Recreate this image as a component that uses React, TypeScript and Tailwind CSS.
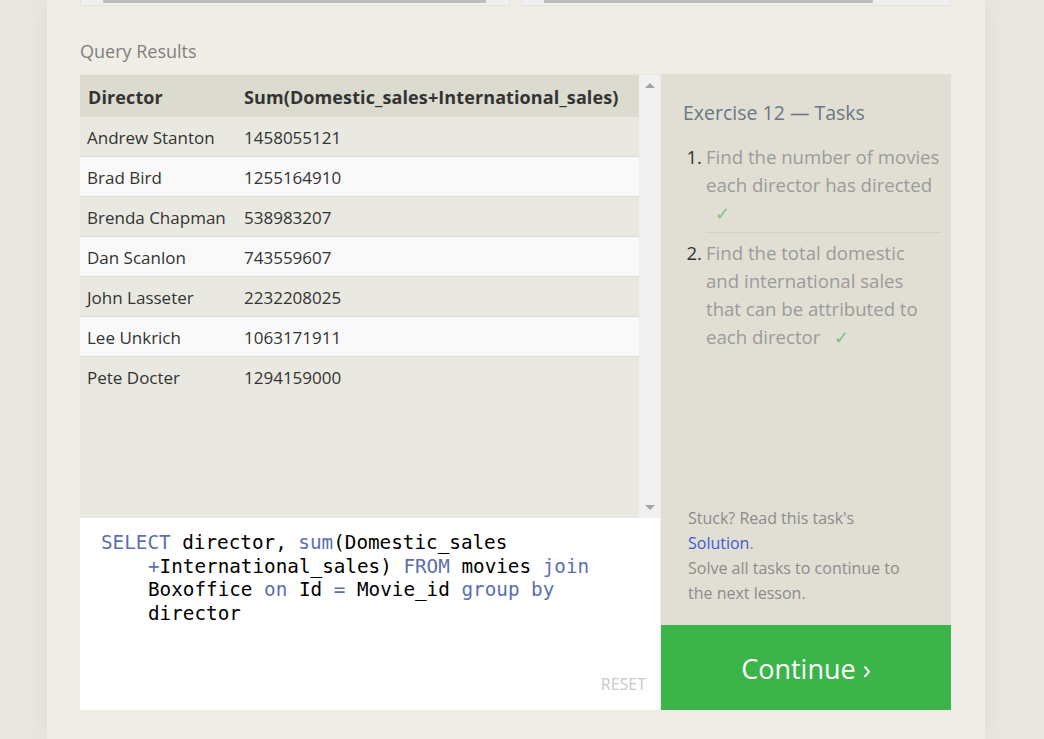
import React from "react";

const rows: [string, string][] = [
  ["Andrew Stanton", "1458055121"],
  ["Brad Bird", "1255164910"],
  ["Brenda Chapman", "538983207"],
  ["Dan Scanlon", "743559607"],
  ["John Lasseter", "2232208025"],
  ["Lee Unkrich", "1063171911"],
  ["Pete Docter", "1294159000"],
];

const K = ({ children }: { children: React.ReactNode }) => (
  <span className="text-[#5b6fae]">{children}</span>
);

export default function App() {
  return (
    <div
      className="min-h-screen bg-[#ebe7e2] flex pl-[47px]"
      style={{ fontFamily: '"Open Sans", "Noto Sans", sans-serif' }}
    >
      <div className="w-[938px] min-h-screen bg-[#f0ede6] px-[33px] shadow-[0_0_30px_rgba(0,0,0,0.07)]">
        {/* top remnants */}
        <div className="flex gap-[11px]">
          <div className="w-[430px] h-[6px] bg-[#efefef] border border-t-0 border-[#e2e2e2] pl-[22px]">
            <div className="w-[383px] h-[3px] bg-[#bdbdbd]" />
          </div>
          <div className="w-[430px] h-[6px] bg-[#efefef] border border-t-0 border-[#e2e2e2] pl-[22px]">
            <div className="w-[329px] h-[3px] bg-[#bdbdbd]" />
          </div>
        </div>

        <div className="mt-[33px] h-[24px] leading-[24px] text-[18px] text-[#7f7f7f]">
          Query Results
        </div>

        <div className="mt-[11px] flex gap-px h-[636px]">
          {/* left */}
          <div className="w-[580px] flex flex-col">
            <div className="h-[444px] flex border-t border-[#e6e4dc]">
              <div className="w-[559px] bg-[#eae9e1] text-[#333]">
                <div className="h-[42px] bg-[#dcdbcf] flex items-center font-bold text-[18px] tracking-[0.1px] pt-[3px]">
                  <div className="w-[156px] pl-[8px]">Director</div>
                  <div className="pl-[8px] whitespace-nowrap">Sum(Domestic_sales+International_sales)</div>
                </div>
                {rows.map(([d, s], i) => (
                  <div
                    key={d}
                    className={`h-[40px] flex items-center text-[17px] pt-[2px] ${
                      i % 2 === 1 ? "bg-[#f9f9f9]" : "bg-[#eae9e1]"
                    } ${i < rows.length - 1 ? "border-b border-[#dedcd4]" : ""}`}
                  >
                    <div className="w-[156px] pl-[7px] whitespace-nowrap">{d}</div>
                    <div className="pl-[8px]">{s}</div>
                  </div>
                ))}
              </div>
              <div className="w-[21px] bg-[#f0f0f0] flex flex-col justify-between items-center py-[8px]">
                <div className="w-0 h-0 border-l-[5px] border-r-[5px] border-b-[5px] border-l-transparent border-r-transparent border-b-[#a3a3a3]" />
                <div className="w-0 h-0 border-l-[5px] border-r-[5px] border-t-[5px] border-l-transparent border-r-transparent border-t-[#a3a3a3]" />
              </div>
            </div>
            <div
              className="relative flex-1 bg-white pt-[13px] pl-[21px] text-[19.3px] leading-[23.7px] text-black"
              style={{ fontFamily: '"DejaVu Sans Mono", "Liberation Mono", monospace' }}
            >
              <div className="whitespace-pre">
                <K>SELECT</K> director, <K>sum</K>(Domestic_sales
              </div>
              <div className="pl-[47px] whitespace-pre">
                <K>+</K>International_sales) <K>FROM</K> movies <K>join</K>
              </div>
              <div className="pl-[47px] whitespace-pre">
                Boxoffice <K>on</K> Id <K>=</K> Movie_id <K>group</K> <K>by</K>
              </div>
              <div className="pl-[47px] whitespace-pre">director</div>
              <div
                className="absolute right-[14px] bottom-[13px] text-[16px] text-[#c9c9c9]"
                style={{ fontFamily: '"Open Sans", sans-serif' }}
              >
                RESET
              </div>
            </div>
          </div>

          {/* right */}
          <div className="w-[290px] flex flex-col">
            <div className="flex-1 bg-[#e1dfd4] flex flex-col justify-between pl-[22px] pr-[10px]">
              <div>
                <div className="mt-[26px] text-[19.5px] leading-[26px] text-[#6a7783]">
                  Exercise 12 — Tasks
                </div>
                <ol className="mt-[17px] text-[18.6px] leading-[28px]">
                  <li className="flex">
                    <span className="w-[23px] text-[#333] shrink-0 text-right pr-[4px]">1.</span>
                    <span className="text-[#9b9b9b] pb-[5px] border-b border-[#d3d1c7] flex-1">
                      Find the number of movies each director has directed
                      <span className="inline-block ml-[9px] text-[#7bc47f] text-[18px] leading-[28px]">✓</span>
                    </span>
                  </li>
                  <li className="flex mt-[6px]">
                    <span className="w-[23px] text-[#333] shrink-0 text-right pr-[4px]">2.</span>
                    <span className="text-[#9b9b9b] flex-1 pr-[12px]">
                      Find the total domestic and international sales that can be attributed to each director
                      <span className="inline-block ml-[14px] text-[#7bc47f] text-[18px] leading-[28px]">✓</span>
                    </span>
                  </li>
                </ol>
              </div>
              <div className="pl-[5px] pr-[30px] pb-[19px] text-[16px] leading-[25px] text-[#8c8c8c]">
                Stuck? Read this task's
                <br />
                <span className="text-[#3d5bd9]">Solution</span>.
                <br />
                Solve all tasks to continue to the next lesson.
              </div>
            </div>
            <div className="h-[85px] bg-[#3bb54a] flex items-center justify-center pt-[4px] text-white text-[27px]">
              Continue ›
            </div>
          </div>
        </div>
      </div>
    </div>
  );
}
